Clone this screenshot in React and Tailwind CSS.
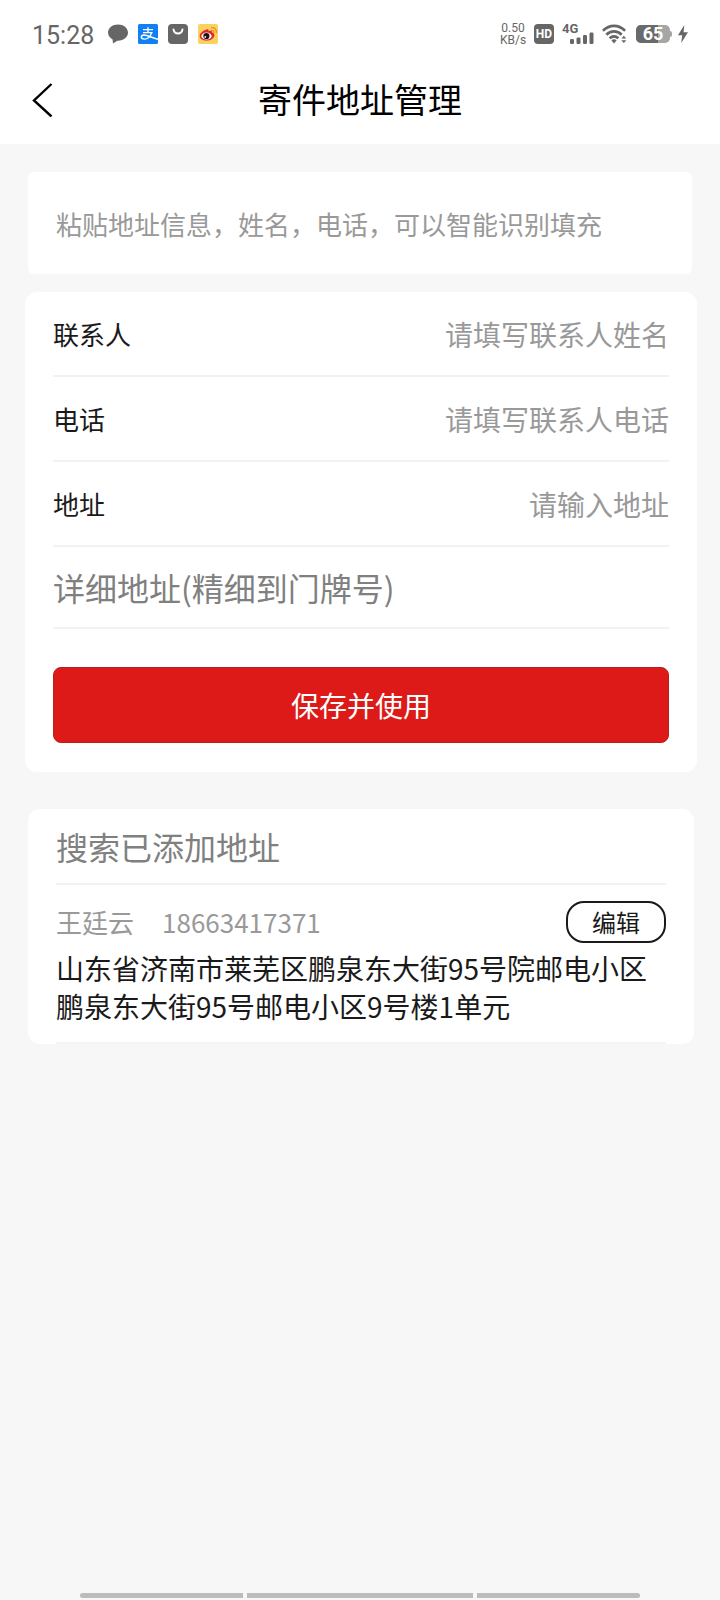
// Sender address management page: status bar, paste box, address form and saved addresses

import React from 'react';

const FORM_ROWS = [
  { id: 'contact', label: '联系人', placeholder: '请填写联系人姓名', type: 'text' },
  { id: 'phone', label: '电话', placeholder: '请填写联系人电话', type: 'tel' },
  { id: 'region', label: '地址', placeholder: '请输入地址', type: 'text' },
];

const SAVED_ADDRESSES = [
  {
    name: '王廷云',
    phone: '18663417371',
    address: '山东省济南市莱芜区鹏泉东大街95号院邮电小区鹏泉东大街95号邮电小区9号楼1单元',
  },
];

const ChatIcon = () => (
  <svg width="20" height="20" viewBox="0 0 20 20" fill="#666666">
    <path d="M10 0.500C4.500 0.500 0 4 0 8.600c0 2.900 1.800 5.400 4.600 6.800L5 19.500l4.300-2.800c6.100.300 10.700-3.400 10.700-8.100C20 4 15.500 0.500 10 0.500z" />
  </svg>
);

const AlipayIcon = () => (
  <svg width="20" height="20" viewBox="0 0 20 20" fill="none">
    <rect width="20" height="20" rx="1.500" fill="#1180f5" />
    <g stroke="#fff" strokeWidth="1.400">
      <path d="M5 5.600h10M10 3.200v5.300M5 8.600h9.600" />
      <path d="M13.600 8.600c-1.200 4-4 6.500-7.300 6.500-4 0-3.800-4.100-.3-4.100 4.200 0 7.500 3 14 4.200" />
    </g>
  </svg>
);

const BagIcon = () => (
  <svg width="20" height="20" viewBox="0 0 20 20" fill="none">
    <rect width="20" height="20" rx="4" fill="#666666" />
    <path d="M5.500 5.500c1 5.300 8 5.300 9 0" stroke="#fff" strokeWidth="1.900" strokeLinecap="round" />
  </svg>
);

const WeiboIcon = () => (
  <svg width="20" height="20" viewBox="0 0 20 20" fill="none">
    <rect width="20" height="20" rx="2" fill="#fbd25f" />
    <path d="M8.500 5.500c1.500-.8 2.400 0 2 1.700 2-.8 4-.6 3.600 1.300 1.700.5 2.500 1.600 2.200 3.200-.5 3-4 4.900-7.900 4.900-4 0-6.700-1.900-6.700-4.600C1.700 9.500 5 6.500 8.500 5.500z" fill="#e3242b" />
    <ellipse cx="8.500" cy="12.100" rx="5.200" ry="3.500" fill="#fff" />
    <circle cx="8.400" cy="12" r="3.100" fill="#151515" />
    <circle cx="7.300" cy="12.900" r="0.900" fill="#fff" />
    <path d="M13.800 6.300c1.500-.2 2.500.9 2.200 2.400M13.600 3.700c3.200-.4 5.300 2 4.700 5" stroke="#ee8a2d" strokeWidth="1.200" strokeLinecap="round" />
  </svg>
);

const SignalIcon = () => (
  <svg width="24" height="12" viewBox="0 0 24 12" fill="#666666">
    <rect x="0" y="7" width="4" height="5" rx="1.200" />
    <rect x="6.500" y="5.500" width="4" height="6.500" rx="1.200" />
    <rect x="13" y="3" width="4" height="9" rx="1.200" />
    <rect x="19.500" y="0.500" width="4" height="11.500" rx="1.200" />
  </svg>
);

const WifiIcon = () => (
  <svg width="26" height="20" viewBox="0 0 26 20" fill="none">
    <g stroke="#666666" strokeWidth="2.600">
      <path d="M0.900 6.700C7.500 0.200 16.500 0.200 23.100 6.700" />
      <path d="M4.300 10.700c4.600-4.400 10.800-4.400 15.400 0" />
      <path d="M7.600 14.300c2.700-2.500 6.100-2.500 8.800 0" />
    </g>
    <path d="M9.300 16.200c1.700-1.300 3.700-1.300 5.400 0L12 19.500z" fill="#666666" />
    <path d="M19.300 14.600h5L21.800 11.800zM19.300 16.200h5L21.800 19z" fill="#666666" />
  </svg>
);

const BoltIcon = () => (
  <svg width="10" height="18" viewBox="0 0 10 18" fill="#666666">
    <path d="M6.300 0L0 10.200h4.200L3.200 18 10 7.300H5.600z" />
  </svg>
);

const Battery = ({ level }) => (
  <div className="flex items-center">
    <div className="relative h-[18px] w-[34px] rounded-[5px] bg-[#a6a6a6]">
      <div className="h-full rounded-l-[5px] bg-[#6a6a6a]" style={{ width: `${level}%` }} />
      <span className="absolute inset-0 flex items-center justify-center font-[Roboto,sans-serif] text-[18px] leading-6 font-bold text-white">
        {level}
      </span>
    </div>
    <div className="h-[6px] w-[2px] rounded-r-full bg-[#a6a6a6]" />
  </div>
);

const StatusBar = () => (
  <div className="flex h-[68px] items-center justify-between px-8 font-[Roboto,sans-serif] text-[#666666]">
    <div className="flex items-center gap-[10px]">
      <span className="w-[66px] pt-1 text-[25px] leading-8">15:28</span>
      <ChatIcon />
      <AlipayIcon />
      <BagIcon />
      <WeiboIcon />
    </div>
    <div className="flex items-center gap-[6px]">
      <div className="flex items-center gap-2">
        <div className="w-[26px] text-center text-[12px] leading-[12px]">
          <div>0.50</div>
          <div>KB/s</div>
        </div>
        <span className="h-5 w-5 rounded-[4px] bg-[#666666] text-center text-[12px] leading-5 font-bold text-white">
          HD
        </span>
        <div className="flex h-5 w-8 flex-col">
          <span className="h-2 text-[13px] leading-[10px] font-bold">4G</span>
          <div className="flex justify-end">
            <SignalIcon />
          </div>
        </div>
        <WifiIcon />
        <Battery level={65} />
      </div>
      <BoltIcon />
    </div>
  </div>
);

const Header = () => (
  <header className="flex h-[76px] items-center bg-white px-8 pb-[14px]">
    <button type="button" aria-label="返回" className="flex w-10 items-center">
      <svg width="21" height="36" viewBox="0 0 21 36" fill="none">
        <path d="M19.500 3L2 19.500 19.500 35.500" stroke="#000" strokeWidth="2.400" />
      </svg>
    </button>
    <h1 className="flex-1 text-center text-[34px] leading-10 text-black">寄件地址管理</h1>
    <div className="w-10" />
  </header>
);

const FormRow = ({ id, label, placeholder, type }) => (
  <div className="flex h-[85px] items-center border-b-2 border-[#f2f2f2]">
    <label htmlFor={id} className="text-[26px] leading-10 text-[#1a1a1a]">
      {label}
    </label>
    <input
      id={id}
      type={type}
      placeholder={placeholder}
      className="h-10 min-w-0 flex-1 text-right text-[28px] text-[#1a1a1a] outline-none placeholder:text-[#999999]"
    />
  </div>
);

const AddressForm = () => (
  <form
    className="mr-[23px] ml-[25px] mt-[18px] rounded-xl bg-white px-7 pb-[29px]"
    onSubmit={(e) => e.preventDefault()}
  >
    {FORM_ROWS.map((row) => (
      <FormRow key={row.id} {...row} />
    ))}
    <div className="flex h-[82px] items-center border-b-2 border-[#f2f2f2]">
      <input
        type="text"
        aria-label="详细地址"
        placeholder="详细地址(精细到门牌号)"
        className="h-12 w-full text-[32px] text-[#1a1a1a] outline-none placeholder:text-[#808080]"
      />
    </div>
    <button
      type="submit"
      className="mt-[38px] h-[76px] w-full rounded-lg border border-[#b5201d] bg-[#dd1a17] text-[28px] text-white"
    >
      保存并使用
    </button>
  </form>
);

const SavedAddress = ({ name, phone, address }) => (
  <li className="border-b-2 border-[#f4f4f4] pt-4 pb-[17px]">
    <div className="flex items-center justify-between">
      <div className="flex gap-7 text-[26px] leading-10 text-[#999999]">
        <span>{name}</span>
        <span>{phone}</span>
      </div>
      <button
        type="button"
        className="h-[42px] w-[100px] rounded-[18px] border-2 border-[#1a1a1a] text-[24px] leading-9 text-[#1a1a1a]"
      >
        编辑
      </button>
    </div>
    <p className="mt-[6px] text-[28px] leading-[38px] text-[#1a1a1a]">{address}</p>
  </li>
);

const SavedAddresses = () => (
  <section className="mr-[26px] ml-7 mt-[37px] rounded-xl bg-white px-7">
    <div className="flex h-[76px] items-center border-b-2 border-[#f2f2f2]">
      <input
        type="search"
        aria-label="搜索已添加地址"
        placeholder="搜索已添加地址"
        className="h-12 w-full text-[32px] text-[#1a1a1a] outline-none placeholder:text-[#808080]"
      />
    </div>
    <ul>
      {SAVED_ADDRESSES.map((item) => (
        <SavedAddress key={item.phone} {...item} />
      ))}
    </ul>
  </section>
);

const App = () => {
  return (
    <div className="flex min-h-screen flex-col bg-[#f7f7f7] font-['Noto_Sans_CJK_SC',sans-serif]">
      <div className="bg-white">
        <StatusBar />
        <Header />
      </div>

      <main>
        <div className="mx-7 mt-7 rounded-md bg-white px-7">
          <input
            type="text"
            aria-label="智能识别地址"
            placeholder="粘贴地址信息，姓名，电话，可以智能识别填充"
            className="h-[102px] w-full text-[26px] text-[#1a1a1a] outline-none placeholder:text-[#999999]"
          />
        </div>
        <AddressForm />
        <SavedAddresses />
      </main>

      {/* System gesture hint bar */}
      <div className="mx-20 mt-auto mb-[2px] flex h-[5px] gap-1">
        <div className="w-[163px] rounded-l-full bg-[#bcbcbc]" />
        <div className="flex-1 bg-[#bcbcbc]" />
        <div className="w-[163px] rounded-r-full bg-[#bcbcbc]" />
      </div>
    </div>
  );
};

export default App;
